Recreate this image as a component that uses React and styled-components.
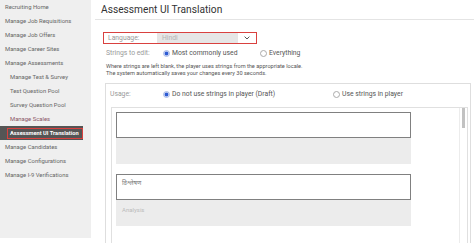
import React from 'react';
import styled, { createGlobalStyle } from 'styled-components';

const Global = createGlobalStyle`
  html, body { margin: 0; padding: 0; background: #fff; overflow: hidden; }
  body { font-family: Roboto, "Liberation Sans", Arial, sans-serif; }
  * { box-sizing: border-box; }
`;

const Page = styled.div`
  display: flex;
  width: 474px;
  height: 243px;
  overflow: hidden;
`;

const Sidebar = styled.nav`
  width: 91px;
  height: 238px;
  background: #efefef;
  flex-shrink: 0;
`;

const NavItem = styled.div`
  height: 14px;
  line-height: 14px;
  font-size: 5.9px;
  color: ${p => (p.$hover ? '#8a5566' : '#666')};
  padding-left: ${p => (p.$sub ? 10 : 5)}px;
  white-space: nowrap;
`;

const ActiveItem = styled.div`
  width: 83px;
  height: 14px;
  background: #555;
  display: flex;
  align-items: center;
  padding-left: 7px;
`;

const ActiveLabel = styled.span`
  flex: 1;
  height: 11px;
  border: 1px solid #d9413f;
  line-height: 9px;
  color: #fff;
  font-weight: 700;
  font-size: 5.7px;
  padding-left: 2px;
  white-space: nowrap;
  overflow: hidden;
`;

const Main = styled.main`
  flex: 1;
  margin-left: 4px;
  display: flex;
  flex-direction: column;
  min-width: 0;
`;

const Header = styled.header`
  height: 28px;
  border-bottom: 1px solid #e4e4e4;
  padding-left: 6px;
  display: flex;
  align-items: center;
`;

const Title = styled.h1`
  margin: 0;
  font-size: 10.2px;
  font-weight: 400;
  color: #333;
`;

const LangBox = styled.div`
  margin: 12px 0 0 8px;
  width: 154px;
  height: 16px;
  border: 1px solid #d9413f;
  display: flex;
  align-items: stretch;
`;

const LangLabel = styled.span`
  width: 53px;
  padding-left: 4px;
  font-size: 6.8px;
  color: #999;
  display: flex;
  align-items: center;
`;

const SelectValue = styled.span`
  width: 81px;
  background: #e6e6e6;
  padding-left: 5px;
  font-size: 6.8px;
  color: #b5b5b5;
  display: flex;
  align-items: center;
`;

const Chevron = styled.span`
  flex: 1;
  display: flex;
  align-items: center;
  justify-content: center;
`;

const OptionRow = styled.div`
  display: flex;
  align-items: center;
  height: 10px;
  margin-top: ${p => p.$mt || 0}px;
  padding-left: ${p => p.$pl || 0}px;
`;

const RowLabel = styled.span`
  width: ${p => p.$w}px;
  font-size: 6.8px;
  color: #999;
  white-space: nowrap;
`;

const Option = styled.label`
  display: flex;
  align-items: center;
  width: ${p => (p.$w ? `${p.$w}px` : 'auto')};
  font-size: 6.8px;
  color: #555;
  white-space: nowrap;
`;

const Radio = styled.span`
  width: 7px;
  height: 7px;
  border-radius: 50%;
  margin-right: 2px;
  border: 1px solid ${p => (p.$on ? '#c9d3ee' : '#aaa')};
  background: ${p => (p.$on ? '#2d5bd3' : '#fff')};
  box-shadow: ${p => (p.$on ? 'inset 0 0 0 0.5px #fff' : 'none')};
  flex-shrink: 0;
`;

const Info = styled.p`
  margin: 6px 0 0 11px;
  font-size: 5.6px;
  line-height: 7px;
  color: #555;
  white-space: nowrap;
`;

const UsageBox = styled.section`
  margin: 6px 3px 0 10px;
  height: 160px;
  border: 1px solid #dedede;
  border-bottom: none;
  padding-top: 5px;
`;

const ScrollBox = styled.div`
  margin: 8px 2px 0 5px;
  height: 140px;
  border: 1px solid #e0e0e0;
  border-bottom: none;
  display: flex;
`;

const Fields = styled.div`
  flex: 1;
  padding: 4px 0 0 4px;
  display: flex;
  flex-direction: column;
  gap: 10px;
`;

const Group = styled.div`
  width: 295px;
  display: flex;
  flex-direction: column;
`;

const Field = styled.div`
  height: 26px;
  border: 1px solid #808080;
  background: #fff;
  padding: 4px 5px;
  font-size: 6px;
  color: #777;
  font-family: Roboto, "Noto Sans", "Noto Sans Devanagari", "Lohit Devanagari", "FreeSans", sans-serif;
`;

const Source = styled.div`
  height: 26px;
  background: #ececec;
  padding: 6px 6px;
  font-size: 6px;
  color: #bbb;
`;

const ScrollTrack = styled.div`
  width: 8px;
  border-left: 1px solid #ececec;
  display: flex;
  justify-content: center;
`;

const Thumb = styled.div`
  width: 3px;
  height: 20px;
  background: #c2c2c2;
`;

const nav = [
  { t: 'Recruiting Home' },
  { t: 'Manage Job Requisitions' },
  { t: 'Manage Job Offers' },
  { t: 'Manage Career Sites' },
  { t: 'Manage Assessments' },
  { t: 'Manage Test & Survey', sub: true },
  { t: 'Test Question Pool', sub: true },
  { t: 'Survey Question Pool', sub: true },
  { t: 'Manage Scales', sub: true, hover: true },
];
const navAfter = ['Manage Candidates', 'Manage Configurations', 'Manage I-9 Verifications'];

export default function App() {
  return (
    <Page>
      <Global />
      <Sidebar>
        {nav.map(n => (
          <NavItem key={n.t} $sub={n.sub} $hover={n.hover}>{n.t}</NavItem>
        ))}
        <ActiveItem>
          <ActiveLabel>Assessment UI Translation</ActiveLabel>
        </ActiveItem>
        {navAfter.map(t => (
          <NavItem key={t}>{t}</NavItem>
        ))}
      </Sidebar>
      <Main>
        <Header>
          <Title>Assessment UI Translation</Title>
        </Header>
        <LangBox>
          <LangLabel>Language:</LangLabel>
          <SelectValue>Hindi</SelectValue>
          <Chevron>
            <svg width="6" height="4" viewBox="0 0 6 4">
              <path d="M0.6 0.6 L3 3 L5.4 0.6" fill="none" stroke="#555" strokeWidth="1" />
            </svg>
          </Chevron>
        </LangBox>
        <OptionRow $mt={5} $pl={11}>
          <RowLabel $w={57}>Strings to edit:</RowLabel>
          <Option $w={97}><Radio $on />Most commonly used</Option>
          <Option><Radio />Everything</Option>
        </OptionRow>
        <Info>
          Where strings are left blank, the player uses strings from the appropriate locale.
          <br />
          The system automatically saves your changes every 30 seconds.
        </Info>
        <UsageBox>
          <OptionRow $pl={4}>
            <RowLabel $w={53}>Usage:</RowLabel>
            <Option $w={170}><Radio $on />Do not use strings in player (Draft)</Option>
            <Option><Radio />Use strings in player</Option>
          </OptionRow>
          <ScrollBox>
            <Fields>
              <Group>
                <Field />
                <Source />
              </Group>
              <Group>
                <Field>विश्लेषण</Field>
                <Source>Analysis</Source>
              </Group>
            </Fields>
            <ScrollTrack>
              <Thumb />
            </ScrollTrack>
          </ScrollBox>
        </UsageBox>
      </Main>
    </Page>
  );
}
